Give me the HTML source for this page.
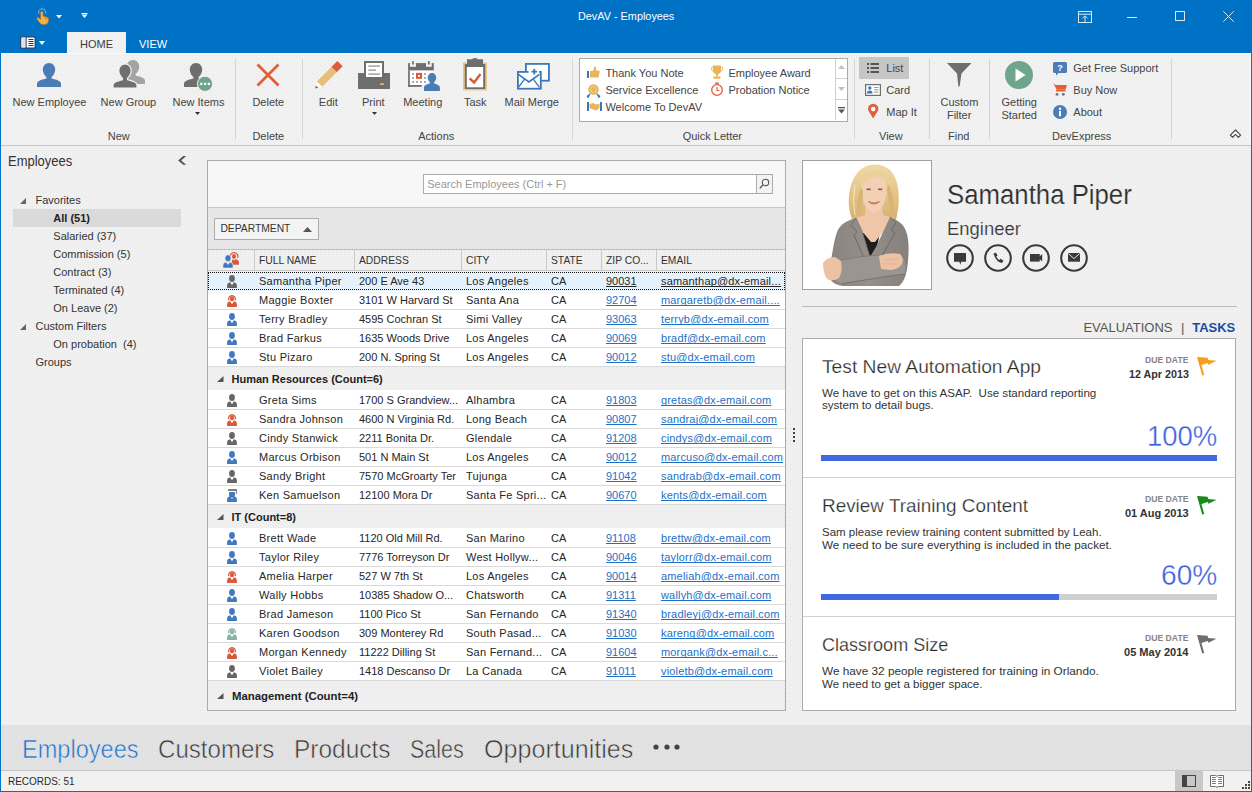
<!DOCTYPE html>
<html><head><meta charset="utf-8"><title>DevAV - Employees</title>
<style>
html,body{margin:0;padding:0;}
body{width:1252px;height:792px;overflow:hidden;position:relative;background:#F0F0F0;font-family:"Liberation Sans",sans-serif;}
.r{position:absolute;}
.t{position:absolute;white-space:nowrap;}
svg{overflow:visible}
.tex{background-image:radial-gradient(circle at 0.5px 0.5px, rgba(0,0,0,0.05) 0.9px, transparent 1px),radial-gradient(circle at 2.5px 2.5px, rgba(0,0,0,0.05) 0.9px, transparent 1px);background-size:4px 4px;}
</style></head><body>
<div class="r" style="left:0px;top:0px;width:1252px;height:53px;background-color:#0072C6;"></div>
<div class="r tex" style="left:0px;top:53px;width:1252px;height:92px;background-color:#F2F2F2;"></div>
<div class="r" style="left:0px;top:145px;width:1252px;height:1px;background-color:#C5C5C5;"></div>
<div class="r" style="left:1px;top:53px;width:1250px;height:1px;background-color:#FAFAFA;"></div>
<div class="r" style="left:1250px;top:53px;width:1px;height:92px;background-color:#FAFAFA;"></div>
<div class="r tex" style="left:0px;top:146px;width:1252px;height:579px;background-color:#F1F1F1;"></div>
<div class="r tex" style="left:0px;top:725px;width:1252px;height:45px;background-color:#E3E3E3;"></div>
<div class="r" style="left:0px;top:770px;width:1252px;height:1px;background-color:#C8C8C8;"></div>
<div class="r" style="left:0px;top:771px;width:1252px;height:20px;background-color:#F1F1F1;"></div>
<div class="r" style="left:0px;top:53px;width:1px;height:739px;background-color:#0072C6;"></div>
<div class="r" style="left:1251px;top:53px;width:1px;height:739px;background-color:#0072C6;"></div>
<div class="r" style="left:0px;top:791px;width:1252px;height:1px;background-color:#0072C6;"></div>
<div class="t" style="left:577.50px;top:11.17px;font-size:11.5px;line-height:11.5px;color:#FFFFFF;transform:scaleX(0.9437);transform-origin:0 0;">DevAV - Employees</div>
<div class="r tex" style="left:67px;top:32px;width:59px;height:21px;background-color:#F2F2F2;"></div>
<div class="t" style="left:80.00px;top:38.69px;font-size:11px;line-height:11px;color:#3C3C3C;">HOME</div>
<div class="t" style="left:139.00px;top:38.69px;font-size:11px;line-height:11px;color:#FFFFFF;">VIEW</div>
<div class="t" style="left:12.50px;top:97.09px;font-size:11px;line-height:11px;color:#444444;">New Employee</div>
<div class="t" style="left:100.60px;top:97.09px;font-size:11px;line-height:11px;color:#444444;">New Group</div>
<div class="t" style="left:172.50px;top:97.09px;font-size:11px;line-height:11px;color:#444444;">New Items</div>
<div class="t" style="left:252.40px;top:97.09px;font-size:11px;line-height:11px;color:#444444;">Delete</div>
<div class="t" style="left:318.80px;top:97.09px;font-size:11px;line-height:11px;color:#444444;">Edit</div>
<div class="t" style="left:362.00px;top:97.09px;font-size:11px;line-height:11px;color:#444444;">Print</div>
<div class="t" style="left:403.20px;top:97.09px;font-size:11px;line-height:11px;color:#444444;">Meeting</div>
<div class="t" style="left:463.90px;top:97.09px;font-size:11px;line-height:11px;color:#444444;">Task</div>
<div class="t" style="left:504.50px;top:97.09px;font-size:11px;line-height:11px;color:#444444;">Mail Merge</div>
<div class="t" style="left:107.70px;top:130.69px;font-size:11px;line-height:11px;color:#444444;">New</div>
<div class="t" style="left:252.40px;top:130.69px;font-size:11px;line-height:11px;color:#444444;">Delete</div>
<div class="t" style="left:418.20px;top:130.69px;font-size:11px;line-height:11px;color:#444444;">Actions</div>
<div class="t" style="left:682.70px;top:130.69px;font-size:11px;line-height:11px;color:#444444;">Quick Letter</div>
<div class="t" style="left:879.00px;top:130.69px;font-size:11px;line-height:11px;color:#444444;">View</div>
<div class="t" style="left:948.00px;top:130.69px;font-size:11px;line-height:11px;color:#444444;">Find</div>
<div class="t" style="left:1052.00px;top:130.69px;font-size:11px;line-height:11px;color:#444444;">DevExpress</div>
<div class="t" style="left:659.4px;width:600px;text-align:center;top:96.99px;font-size:11px;line-height:11px;color:#444444;">Custom</div>
<div class="t" style="left:659.2px;width:600px;text-align:center;top:109.59px;font-size:11px;line-height:11px;color:#444444;">Filter</div>
<div class="t" style="left:719.2px;width:600px;text-align:center;top:96.99px;font-size:11px;line-height:11px;color:#444444;">Getting</div>
<div class="t" style="left:719.2px;width:600px;text-align:center;top:109.59px;font-size:11px;line-height:11px;color:#444444;">Started</div>
<div class="r" style="left:235px;top:59px;width:1px;height:80px;background-color:#D5D5D5;"></div>
<div class="r" style="left:302px;top:59px;width:1px;height:80px;background-color:#D5D5D5;"></div>
<div class="r" style="left:572px;top:59px;width:1px;height:80px;background-color:#D5D5D5;"></div>
<div class="r" style="left:854px;top:59px;width:1px;height:80px;background-color:#D5D5D5;"></div>
<div class="r" style="left:929px;top:59px;width:1px;height:80px;background-color:#D5D5D5;"></div>
<div class="r" style="left:989px;top:59px;width:1px;height:80px;background-color:#D5D5D5;"></div>
<div class="r" style="left:1171px;top:59px;width:1px;height:80px;background-color:#D5D5D5;"></div>
<div class="r" style="left:579px;top:58px;width:269px;height:64px;box-sizing:border-box;border:1px solid #ABABAB;background:#FFFFFF;"></div>
<div class="t" style="left:605.40px;top:68.29px;font-size:11px;line-height:11px;color:#444444;">Thank You Note</div>
<div class="t" style="left:605.40px;top:85.29px;font-size:11px;line-height:11px;color:#444444;">Service Excellence</div>
<div class="t" style="left:605.40px;top:102.19px;font-size:11px;line-height:11px;color:#444444;">Welcome To DevAV</div>
<div class="t" style="left:728.40px;top:68.29px;font-size:11px;line-height:11px;color:#444444;">Employee Award</div>
<div class="t" style="left:728.40px;top:85.29px;font-size:11px;line-height:11px;color:#444444;">Probation Notice</div>
<div class="r" style="left:859px;top:57px;width:50px;height:22px;background-color:#C6C6C6;"></div>
<div class="t" style="left:886.30px;top:62.89px;font-size:11px;line-height:11px;color:#444444;">List</div>
<div class="t" style="left:886.30px;top:84.89px;font-size:11px;line-height:11px;color:#444444;">Card</div>
<div class="t" style="left:886.30px;top:106.89px;font-size:11px;line-height:11px;color:#444444;">Map It</div>
<div class="t" style="left:1073.30px;top:62.89px;font-size:11px;line-height:11px;color:#444444;">Get Free Support</div>
<div class="t" style="left:1073.30px;top:84.89px;font-size:11px;line-height:11px;color:#444444;">Buy Now</div>
<div class="t" style="left:1073.30px;top:106.89px;font-size:11px;line-height:11px;color:#444444;">About</div>
<div class="t" style="left:7.60px;top:154.05px;font-size:14px;line-height:14px;color:#333333;transform:scaleX(0.9270);transform-origin:0 0;">Employees</div>
<div class="r" style="left:13px;top:209px;width:168px;height:18px;background-color:#DADADA;"></div>
<div class="t" style="left:35.50px;top:194.89px;font-size:11px;line-height:11px;color:#333333;">Favorites</div>
<div class="t" style="left:53.30px;top:213.09px;font-size:11px;line-height:11px;color:#222222;font-weight:700;">All (51)</div>
<div class="t" style="left:53.30px;top:230.99px;font-size:11px;line-height:11px;color:#333333;">Salaried (37)</div>
<div class="t" style="left:53.30px;top:248.99px;font-size:11px;line-height:11px;color:#333333;">Commission (5)</div>
<div class="t" style="left:53.30px;top:266.99px;font-size:11px;line-height:11px;color:#333333;">Contract (3)</div>
<div class="t" style="left:53.30px;top:284.99px;font-size:11px;line-height:11px;color:#333333;">Terminated (4)</div>
<div class="t" style="left:53.30px;top:302.99px;font-size:11px;line-height:11px;color:#333333;">On Leave (2)</div>
<div class="t" style="left:35.50px;top:320.99px;font-size:11px;line-height:11px;color:#333333;">Custom Filters</div>
<div class="t" style="left:53.30px;top:338.99px;font-size:11px;line-height:11px;color:#333333;">On probation&nbsp; (4)</div>
<div class="t" style="left:35.50px;top:356.99px;font-size:11px;line-height:11px;color:#333333;">Groups</div>
<div class="r" style="left:207px;top:160px;width:579px;height:551px;box-sizing:border-box;border:1px solid #ABABAB;background:#FFFFFF;"></div>
<div class="r" style="left:208px;top:161px;width:577px;height:46px;background-color:#F7F7F7;"></div>
<div class="r" style="left:208px;top:207px;width:577px;height:1px;background-color:#C8C8C8;"></div>
<div class="r tex" style="left:208px;top:208px;width:577px;height:41px;background-color:#E8E8E8;"></div>
<div class="r" style="left:208px;top:249px;width:577px;height:1px;background-color:#C0C0C0;"></div>
<div class="r tex" style="left:208px;top:250px;width:577px;height:21px;background-color:#F1F1F1;"></div>
<div class="r" style="left:423px;top:174px;width:350px;height:20px;box-sizing:border-box;border:1px solid #ABABAB;background:#FFFFFF;"></div>
<div class="t" style="left:427.20px;top:178.99px;font-size:11px;line-height:11px;color:#999999;">Search Employees (Ctrl + F)</div>
<div class="r" style="left:214px;top:218px;width:105px;height:22px;box-sizing:border-box;border:1px solid #ABABAB;background:#F3F3F3;"></div>
<div class="t" style="left:220.40px;top:224.48px;font-size:10.3px;line-height:10.3px;color:#333333;">DEPARTMENT</div>
<div class="r" style="left:802px;top:160px;width:130px;height:130px;box-sizing:border-box;border:1px solid #A0A0A0;background:#FFFFFF;"></div>
<div class="t" style="left:946.80px;top:182.34px;font-size:27px;line-height:27px;color:#2E2E2E;-webkit-text-stroke:0.2px #F0F0F0;transform:scaleX(0.9544);transform-origin:0 0;">Samantha Piper</div>
<div class="t" style="left:946.80px;top:220.26px;font-size:18px;line-height:18px;color:#383838;-webkit-text-stroke:0.15px #F0F0F0;transform:scaleX(1.0242);transform-origin:0 0;">Engineer</div>
<div class="r" style="left:802px;top:306px;width:435px;height:1px;background-color:#BBBBBB;"></div>
<div class="t" style="left:1083.40px;top:320.50px;font-size:13px;line-height:13px;color:#555555;">EVALUATIONS</div>
<div class="t" style="left:1181.00px;top:320.50px;font-size:13px;line-height:13px;color:#555555;">|</div>
<div class="t" style="left:1192.20px;top:320.50px;font-size:13px;line-height:13px;color:#1B4AA5;font-weight:700;">TASKS</div>
<div class="r" style="left:802px;top:338px;width:434px;height:373px;box-sizing:border-box;border:1px solid #ABABAB;background:#FFFFFF;"></div>
<div class="t" style="left:21.50px;top:736.71px;font-size:25.5px;line-height:25.5px;color:#1873D0;-webkit-text-stroke:0.55px #E3E3E3;transform:scaleX(0.9243);transform-origin:0 0;">Employees</div>
<div class="t" style="left:157.80px;top:736.71px;font-size:25.5px;line-height:25.5px;color:#383838;-webkit-text-stroke:0.55px #E3E3E3;transform:scaleX(0.9442);transform-origin:0 0;">Customers</div>
<div class="t" style="left:293.80px;top:736.71px;font-size:25.5px;line-height:25.5px;color:#383838;-webkit-text-stroke:0.55px #E3E3E3;transform:scaleX(0.9599);transform-origin:0 0;">Products</div>
<div class="t" style="left:409.60px;top:736.71px;font-size:25.5px;line-height:25.5px;color:#383838;-webkit-text-stroke:0.55px #E3E3E3;transform:scaleX(0.8418);transform-origin:0 0;">Sales</div>
<div class="t" style="left:483.70px;top:736.71px;font-size:25.5px;line-height:25.5px;color:#383838;-webkit-text-stroke:0.55px #E3E3E3;transform:scaleX(0.9850);transform-origin:0 0;">Opportunities</div>
<div class="t" style="left:7.50px;top:776.43px;font-size:10.6px;line-height:10.6px;color:#2A2A2A;transform:scaleX(0.9408);transform-origin:0 0;">RECORDS: 51</div>
<div class="r" style="left:254px;top:250px;width:1px;height:21px;background-color:#C8C8C8;"></div>
<div class="r" style="left:354px;top:250px;width:1px;height:21px;background-color:#C8C8C8;"></div>
<div class="r" style="left:461px;top:250px;width:1px;height:21px;background-color:#C8C8C8;"></div>
<div class="r" style="left:546px;top:250px;width:1px;height:21px;background-color:#C8C8C8;"></div>
<div class="r" style="left:601px;top:250px;width:1px;height:21px;background-color:#C8C8C8;"></div>
<div class="r" style="left:656px;top:250px;width:1px;height:21px;background-color:#C8C8C8;"></div>
<div class="r" style="left:208px;top:270px;width:577px;height:1px;background-color:#C8C8C8;"></div>
<div class="t" style="left:259.00px;top:255.58px;font-size:10.3px;line-height:10.3px;color:#333333;">FULL NAME</div>
<div class="t" style="left:359.00px;top:255.58px;font-size:10.3px;line-height:10.3px;color:#333333;">ADDRESS</div>
<div class="t" style="left:466.00px;top:255.58px;font-size:10.3px;line-height:10.3px;color:#333333;">CITY</div>
<div class="t" style="left:551.00px;top:255.58px;font-size:10.3px;line-height:10.3px;color:#333333;">STATE</div>
<div class="t" style="left:606.00px;top:255.58px;font-size:10.3px;line-height:10.3px;color:#333333;">ZIP CO...</div>
<div class="t" style="left:661.00px;top:255.58px;font-size:10.3px;line-height:10.3px;color:#333333;">EMAIL</div>
<div class="r" style="left:208px;top:271px;width:577px;height:20px;background-color:#E5F1FB;"></div>
<svg class="r" style="left:227px;top:275px;" width="10" height="13" viewBox="0 0 10 13"><ellipse cx="5" cy="3.45" rx="2.9" ry="3.45" fill="#666666"/><path d="M0.1 12.9 L0.1 10.6 Q0.2 7.7 3.1 7.2 L5 10.2 L6.9 7.2 Q9.8 7.7 9.9 10.6 L9.9 12.9 Z" fill="#666666"/></svg>
<div class="t" style="left:259.00px;top:276.29px;font-size:11px;line-height:11px;color:#262626;letter-spacing:0.28px;">Samantha Piper</div>
<div class="t" style="left:359.00px;top:276.29px;font-size:11px;line-height:11px;color:#262626;">200 E Ave 43</div>
<div class="t" style="left:466.00px;top:276.29px;font-size:11px;line-height:11px;color:#262626;letter-spacing:0.25px;">Los Angeles</div>
<div class="t" style="left:551.00px;top:276.29px;font-size:11px;line-height:11px;color:#262626;">CA</div>
<div class="t" style="left:606.00px;top:276.29px;font-size:11px;line-height:11px;color:#262626;text-decoration:underline;text-decoration-skip-ink:none;">90031</div>
<div class="t" style="left:661.00px;top:276.29px;font-size:11px;line-height:11px;color:#262626;text-decoration:underline;text-decoration-skip-ink:none;letter-spacing:0.17px;">samanthap@dx-email...</div>
<div class="r" style="left:208px;top:272px;width:577px;height:18px;box-sizing:border-box;border:1px dotted #111;background:transparent;"></div>
<svg class="r" style="left:227px;top:294px;" width="10" height="13" viewBox="0 0 10 13"><path d="M1.8 6.3 A3.4 3.4 0 1 1 8.2 6.3" fill="none" stroke="#D9593A" stroke-width="1.3"/><ellipse cx="5" cy="4.9" rx="2.05" ry="2.35" fill="#D9593A"/><path d="M0.1 12.9 L0.1 10.6 Q0.2 7.7 3.1 7.2 L5 10.2 L6.9 7.2 Q9.8 7.7 9.9 10.6 L9.9 12.9 Z" fill="#D9593A"/></svg>
<div class="t" style="left:259.00px;top:295.39px;font-size:11px;line-height:11px;color:#262626;letter-spacing:0.28px;">Maggie Boxter</div>
<div class="t" style="left:359.00px;top:295.39px;font-size:11px;line-height:11px;color:#262626;">3101 W Harvard St</div>
<div class="t" style="left:466.00px;top:295.39px;font-size:11px;line-height:11px;color:#262626;letter-spacing:0.25px;">Santa Ana</div>
<div class="t" style="left:551.00px;top:295.39px;font-size:11px;line-height:11px;color:#262626;">CA</div>
<div class="t" style="left:606.00px;top:295.39px;font-size:11px;line-height:11px;color:#1F6FC6;text-decoration:underline;text-decoration-skip-ink:none;">92704</div>
<div class="t" style="left:661.00px;top:295.39px;font-size:11px;line-height:11px;color:#1F6FC6;text-decoration:underline;text-decoration-skip-ink:none;letter-spacing:0.17px;">margaretb@dx-email....</div>
<div class="r" style="left:208px;top:309px;width:577px;height:1px;background-color:#DADADA;"></div>
<svg class="r" style="left:227px;top:313px;" width="10" height="13" viewBox="0 0 10 13"><ellipse cx="5" cy="3.45" rx="2.9" ry="3.45" fill="#4178BE"/><path d="M0.1 12.9 L0.1 10.6 Q0.2 7.7 3.1 7.2 L5 10.2 L6.9 7.2 Q9.8 7.7 9.9 10.6 L9.9 12.9 Z" fill="#4178BE"/></svg>
<div class="t" style="left:259.00px;top:314.39px;font-size:11px;line-height:11px;color:#262626;letter-spacing:0.28px;">Terry Bradley</div>
<div class="t" style="left:359.00px;top:314.39px;font-size:11px;line-height:11px;color:#262626;">4595 Cochran St</div>
<div class="t" style="left:466.00px;top:314.39px;font-size:11px;line-height:11px;color:#262626;letter-spacing:0.25px;">Simi Valley</div>
<div class="t" style="left:551.00px;top:314.39px;font-size:11px;line-height:11px;color:#262626;">CA</div>
<div class="t" style="left:606.00px;top:314.39px;font-size:11px;line-height:11px;color:#1F6FC6;text-decoration:underline;text-decoration-skip-ink:none;">93063</div>
<div class="t" style="left:661.00px;top:314.39px;font-size:11px;line-height:11px;color:#1F6FC6;text-decoration:underline;text-decoration-skip-ink:none;letter-spacing:0.17px;">terryb@dx-email.com</div>
<div class="r" style="left:208px;top:328px;width:577px;height:1px;background-color:#DADADA;"></div>
<svg class="r" style="left:227px;top:332px;" width="10" height="13" viewBox="0 0 10 13"><ellipse cx="5" cy="3.45" rx="2.9" ry="3.45" fill="#4178BE"/><path d="M0.1 12.9 L0.1 10.6 Q0.2 7.7 3.1 7.2 L5 10.2 L6.9 7.2 Q9.8 7.7 9.9 10.6 L9.9 12.9 Z" fill="#4178BE"/></svg>
<div class="t" style="left:259.00px;top:333.39px;font-size:11px;line-height:11px;color:#262626;letter-spacing:0.28px;">Brad Farkus</div>
<div class="t" style="left:359.00px;top:333.39px;font-size:11px;line-height:11px;color:#262626;">1635 Woods Drive</div>
<div class="t" style="left:466.00px;top:333.39px;font-size:11px;line-height:11px;color:#262626;letter-spacing:0.25px;">Los Angeles</div>
<div class="t" style="left:551.00px;top:333.39px;font-size:11px;line-height:11px;color:#262626;">CA</div>
<div class="t" style="left:606.00px;top:333.39px;font-size:11px;line-height:11px;color:#1F6FC6;text-decoration:underline;text-decoration-skip-ink:none;">90069</div>
<div class="t" style="left:661.00px;top:333.39px;font-size:11px;line-height:11px;color:#1F6FC6;text-decoration:underline;text-decoration-skip-ink:none;letter-spacing:0.17px;">bradf@dx-email.com</div>
<div class="r" style="left:208px;top:347px;width:577px;height:1px;background-color:#DADADA;"></div>
<svg class="r" style="left:227px;top:351px;" width="10" height="13" viewBox="0 0 10 13"><ellipse cx="5" cy="3.45" rx="2.9" ry="3.45" fill="#4178BE"/><path d="M0.1 12.9 L0.1 10.6 Q0.2 7.7 3.1 7.2 L5 10.2 L6.9 7.2 Q9.8 7.7 9.9 10.6 L9.9 12.9 Z" fill="#4178BE"/></svg>
<div class="t" style="left:259.00px;top:352.39px;font-size:11px;line-height:11px;color:#262626;letter-spacing:0.28px;">Stu Pizaro</div>
<div class="t" style="left:359.00px;top:352.39px;font-size:11px;line-height:11px;color:#262626;">200 N. Spring St</div>
<div class="t" style="left:466.00px;top:352.39px;font-size:11px;line-height:11px;color:#262626;letter-spacing:0.25px;">Los Angeles</div>
<div class="t" style="left:551.00px;top:352.39px;font-size:11px;line-height:11px;color:#262626;">CA</div>
<div class="t" style="left:606.00px;top:352.39px;font-size:11px;line-height:11px;color:#1F6FC6;text-decoration:underline;text-decoration-skip-ink:none;">90012</div>
<div class="t" style="left:661.00px;top:352.39px;font-size:11px;line-height:11px;color:#1F6FC6;text-decoration:underline;text-decoration-skip-ink:none;letter-spacing:0.17px;">stu@dx-email.com</div>
<div class="r" style="left:208px;top:366px;width:577px;height:1px;background-color:#DADADA;"></div>
<div class="r tex" style="left:208px;top:367px;width:577px;height:23px;background-color:#F1F1F1;"></div>
<svg class="r" style="left:217px;top:376px;" width="7" height="6" viewBox="0 0 7 6"><path d="M6.5 0 L6.5 6 L0 6 Z" fill="#555"/></svg>
<div class="t" style="left:231.50px;top:374.29px;font-size:11px;line-height:11px;color:#222222;font-weight:700;">Human Resources (Count=6)</div>
<svg class="r" style="left:227px;top:394px;" width="10" height="13" viewBox="0 0 10 13"><ellipse cx="5" cy="3.45" rx="2.9" ry="3.45" fill="#666666"/><path d="M0.1 12.9 L0.1 10.6 Q0.2 7.7 3.1 7.2 L5 10.2 L6.9 7.2 Q9.8 7.7 9.9 10.6 L9.9 12.9 Z" fill="#666666"/></svg>
<div class="t" style="left:259.00px;top:395.29px;font-size:11px;line-height:11px;color:#262626;letter-spacing:0.28px;">Greta Sims</div>
<div class="t" style="left:359.00px;top:395.29px;font-size:11px;line-height:11px;color:#262626;">1700 S Grandview...</div>
<div class="t" style="left:466.00px;top:395.29px;font-size:11px;line-height:11px;color:#262626;letter-spacing:0.25px;">Alhambra</div>
<div class="t" style="left:551.00px;top:395.29px;font-size:11px;line-height:11px;color:#262626;">CA</div>
<div class="t" style="left:606.00px;top:395.29px;font-size:11px;line-height:11px;color:#1F6FC6;text-decoration:underline;text-decoration-skip-ink:none;">91803</div>
<div class="t" style="left:661.00px;top:395.29px;font-size:11px;line-height:11px;color:#1F6FC6;text-decoration:underline;text-decoration-skip-ink:none;letter-spacing:0.17px;">gretas@dx-email.com</div>
<div class="r" style="left:208px;top:409px;width:577px;height:1px;background-color:#DADADA;"></div>
<svg class="r" style="left:227px;top:413px;" width="10" height="13" viewBox="0 0 10 13"><path d="M1.8 6.3 A3.4 3.4 0 1 1 8.2 6.3" fill="none" stroke="#D9593A" stroke-width="1.3"/><ellipse cx="5" cy="4.9" rx="2.05" ry="2.35" fill="#D9593A"/><path d="M0.1 12.9 L0.1 10.6 Q0.2 7.7 3.1 7.2 L5 10.2 L6.9 7.2 Q9.8 7.7 9.9 10.6 L9.9 12.9 Z" fill="#D9593A"/></svg>
<div class="t" style="left:259.00px;top:414.39px;font-size:11px;line-height:11px;color:#262626;letter-spacing:0.28px;">Sandra Johnson</div>
<div class="t" style="left:359.00px;top:414.39px;font-size:11px;line-height:11px;color:#262626;">4600 N Virginia Rd.</div>
<div class="t" style="left:466.00px;top:414.39px;font-size:11px;line-height:11px;color:#262626;letter-spacing:0.25px;">Long Beach</div>
<div class="t" style="left:551.00px;top:414.39px;font-size:11px;line-height:11px;color:#262626;">CA</div>
<div class="t" style="left:606.00px;top:414.39px;font-size:11px;line-height:11px;color:#1F6FC6;text-decoration:underline;text-decoration-skip-ink:none;">90807</div>
<div class="t" style="left:661.00px;top:414.39px;font-size:11px;line-height:11px;color:#1F6FC6;text-decoration:underline;text-decoration-skip-ink:none;letter-spacing:0.17px;">sandraj@dx-email.com</div>
<div class="r" style="left:208px;top:428px;width:577px;height:1px;background-color:#DADADA;"></div>
<svg class="r" style="left:227px;top:432px;" width="10" height="13" viewBox="0 0 10 13"><ellipse cx="5" cy="3.45" rx="2.9" ry="3.45" fill="#666666"/><path d="M0.1 12.9 L0.1 10.6 Q0.2 7.7 3.1 7.2 L5 10.2 L6.9 7.2 Q9.8 7.7 9.9 10.6 L9.9 12.9 Z" fill="#666666"/></svg>
<div class="t" style="left:259.00px;top:433.39px;font-size:11px;line-height:11px;color:#262626;letter-spacing:0.28px;">Cindy Stanwick</div>
<div class="t" style="left:359.00px;top:433.39px;font-size:11px;line-height:11px;color:#262626;">2211 Bonita Dr.</div>
<div class="t" style="left:466.00px;top:433.39px;font-size:11px;line-height:11px;color:#262626;letter-spacing:0.25px;">Glendale</div>
<div class="t" style="left:551.00px;top:433.39px;font-size:11px;line-height:11px;color:#262626;">CA</div>
<div class="t" style="left:606.00px;top:433.39px;font-size:11px;line-height:11px;color:#1F6FC6;text-decoration:underline;text-decoration-skip-ink:none;">91208</div>
<div class="t" style="left:661.00px;top:433.39px;font-size:11px;line-height:11px;color:#1F6FC6;text-decoration:underline;text-decoration-skip-ink:none;letter-spacing:0.17px;">cindys@dx-email.com</div>
<div class="r" style="left:208px;top:447px;width:577px;height:1px;background-color:#DADADA;"></div>
<svg class="r" style="left:227px;top:451px;" width="10" height="13" viewBox="0 0 10 13"><ellipse cx="5" cy="3.45" rx="2.9" ry="3.45" fill="#4178BE"/><path d="M0.1 12.9 L0.1 10.6 Q0.2 7.7 3.1 7.2 L5 10.2 L6.9 7.2 Q9.8 7.7 9.9 10.6 L9.9 12.9 Z" fill="#4178BE"/></svg>
<div class="t" style="left:259.00px;top:452.39px;font-size:11px;line-height:11px;color:#262626;letter-spacing:0.28px;">Marcus Orbison</div>
<div class="t" style="left:359.00px;top:452.39px;font-size:11px;line-height:11px;color:#262626;">501 N Main St</div>
<div class="t" style="left:466.00px;top:452.39px;font-size:11px;line-height:11px;color:#262626;letter-spacing:0.25px;">Los Angeles</div>
<div class="t" style="left:551.00px;top:452.39px;font-size:11px;line-height:11px;color:#262626;">CA</div>
<div class="t" style="left:606.00px;top:452.39px;font-size:11px;line-height:11px;color:#1F6FC6;text-decoration:underline;text-decoration-skip-ink:none;">90012</div>
<div class="t" style="left:661.00px;top:452.39px;font-size:11px;line-height:11px;color:#1F6FC6;text-decoration:underline;text-decoration-skip-ink:none;letter-spacing:0.17px;">marcuso@dx-email.com</div>
<div class="r" style="left:208px;top:466px;width:577px;height:1px;background-color:#DADADA;"></div>
<svg class="r" style="left:227px;top:470px;" width="10" height="13" viewBox="0 0 10 13"><ellipse cx="5" cy="3.45" rx="2.9" ry="3.45" fill="#666666"/><path d="M0.1 12.9 L0.1 10.6 Q0.2 7.7 3.1 7.2 L5 10.2 L6.9 7.2 Q9.8 7.7 9.9 10.6 L9.9 12.9 Z" fill="#666666"/></svg>
<div class="t" style="left:259.00px;top:471.39px;font-size:11px;line-height:11px;color:#262626;letter-spacing:0.28px;">Sandy Bright</div>
<div class="t" style="left:359.00px;top:471.39px;font-size:11px;line-height:11px;color:#262626;">7570 McGroarty Ter</div>
<div class="t" style="left:466.00px;top:471.39px;font-size:11px;line-height:11px;color:#262626;letter-spacing:0.25px;">Tujunga</div>
<div class="t" style="left:551.00px;top:471.39px;font-size:11px;line-height:11px;color:#262626;">CA</div>
<div class="t" style="left:606.00px;top:471.39px;font-size:11px;line-height:11px;color:#1F6FC6;text-decoration:underline;text-decoration-skip-ink:none;">91042</div>
<div class="t" style="left:661.00px;top:471.39px;font-size:11px;line-height:11px;color:#1F6FC6;text-decoration:underline;text-decoration-skip-ink:none;letter-spacing:0.17px;">sandrab@dx-email.com</div>
<div class="r" style="left:208px;top:485px;width:577px;height:1px;background-color:#DADADA;"></div>
<svg class="r" style="left:227px;top:489px;" width="10" height="13" viewBox="0 0 10 13"><path d="M1 0.1 L9.6 0.1 L9.6 1.9 L1 1.9 Z" fill="#707070"/><rect x="8.9" y="0.1" width="0.9" height="5" fill="#707070"/><path d="M2.1 3 L7.9 3 L7.9 6 Q7.9 8.8 5 8.8 Q2.1 8.8 2.1 6 Z" fill="#4178BE"/><path d="M0.1 12.9 L0.1 10.6 Q0.2 7.7 3.1 7.2 L5 10.2 L6.9 7.2 Q9.8 7.7 9.9 10.6 L9.9 12.9 Z" fill="#4178BE"/></svg>
<div class="t" style="left:259.00px;top:490.39px;font-size:11px;line-height:11px;color:#262626;letter-spacing:0.28px;">Ken Samuelson</div>
<div class="t" style="left:359.00px;top:490.39px;font-size:11px;line-height:11px;color:#262626;">12100 Mora Dr</div>
<div class="t" style="left:466.00px;top:490.39px;font-size:11px;line-height:11px;color:#262626;letter-spacing:0.25px;">Santa Fe Spri...</div>
<div class="t" style="left:551.00px;top:490.39px;font-size:11px;line-height:11px;color:#262626;">CA</div>
<div class="t" style="left:606.00px;top:490.39px;font-size:11px;line-height:11px;color:#1F6FC6;text-decoration:underline;text-decoration-skip-ink:none;">90670</div>
<div class="t" style="left:661.00px;top:490.39px;font-size:11px;line-height:11px;color:#1F6FC6;text-decoration:underline;text-decoration-skip-ink:none;letter-spacing:0.17px;">kents@dx-email.com</div>
<div class="r" style="left:208px;top:504px;width:577px;height:1px;background-color:#DADADA;"></div>
<div class="r tex" style="left:208px;top:505px;width:577px;height:23px;background-color:#F1F1F1;"></div>
<svg class="r" style="left:217px;top:514px;" width="7" height="6" viewBox="0 0 7 6"><path d="M6.5 0 L6.5 6 L0 6 Z" fill="#555"/></svg>
<div class="t" style="left:231.50px;top:512.29px;font-size:11px;line-height:11px;color:#222222;font-weight:700;">IT (Count=8)</div>
<svg class="r" style="left:227px;top:532px;" width="10" height="13" viewBox="0 0 10 13"><ellipse cx="5" cy="3.45" rx="2.9" ry="3.45" fill="#4178BE"/><path d="M0.1 12.9 L0.1 10.6 Q0.2 7.7 3.1 7.2 L5 10.2 L6.9 7.2 Q9.8 7.7 9.9 10.6 L9.9 12.9 Z" fill="#4178BE"/></svg>
<div class="t" style="left:259.00px;top:533.29px;font-size:11px;line-height:11px;color:#262626;letter-spacing:0.28px;">Brett Wade</div>
<div class="t" style="left:359.00px;top:533.29px;font-size:11px;line-height:11px;color:#262626;">1120 Old Mill Rd.</div>
<div class="t" style="left:466.00px;top:533.29px;font-size:11px;line-height:11px;color:#262626;letter-spacing:0.25px;">San Marino</div>
<div class="t" style="left:551.00px;top:533.29px;font-size:11px;line-height:11px;color:#262626;">CA</div>
<div class="t" style="left:606.00px;top:533.29px;font-size:11px;line-height:11px;color:#1F6FC6;text-decoration:underline;text-decoration-skip-ink:none;">91108</div>
<div class="t" style="left:661.00px;top:533.29px;font-size:11px;line-height:11px;color:#1F6FC6;text-decoration:underline;text-decoration-skip-ink:none;letter-spacing:0.17px;">brettw@dx-email.com</div>
<div class="r" style="left:208px;top:547px;width:577px;height:1px;background-color:#DADADA;"></div>
<svg class="r" style="left:227px;top:551px;" width="10" height="13" viewBox="0 0 10 13"><ellipse cx="5" cy="3.45" rx="2.9" ry="3.45" fill="#4178BE"/><path d="M0.1 12.9 L0.1 10.6 Q0.2 7.7 3.1 7.2 L5 10.2 L6.9 7.2 Q9.8 7.7 9.9 10.6 L9.9 12.9 Z" fill="#4178BE"/></svg>
<div class="t" style="left:259.00px;top:552.39px;font-size:11px;line-height:11px;color:#262626;letter-spacing:0.28px;">Taylor Riley</div>
<div class="t" style="left:359.00px;top:552.39px;font-size:11px;line-height:11px;color:#262626;">7776 Torreyson Dr</div>
<div class="t" style="left:466.00px;top:552.39px;font-size:11px;line-height:11px;color:#262626;letter-spacing:0.25px;">West Hollyw...</div>
<div class="t" style="left:551.00px;top:552.39px;font-size:11px;line-height:11px;color:#262626;">CA</div>
<div class="t" style="left:606.00px;top:552.39px;font-size:11px;line-height:11px;color:#1F6FC6;text-decoration:underline;text-decoration-skip-ink:none;">90046</div>
<div class="t" style="left:661.00px;top:552.39px;font-size:11px;line-height:11px;color:#1F6FC6;text-decoration:underline;text-decoration-skip-ink:none;letter-spacing:0.17px;">taylorr@dx-email.com</div>
<div class="r" style="left:208px;top:566px;width:577px;height:1px;background-color:#DADADA;"></div>
<svg class="r" style="left:227px;top:570px;" width="10" height="13" viewBox="0 0 10 13"><path d="M1.8 6.3 A3.4 3.4 0 1 1 8.2 6.3" fill="none" stroke="#D9593A" stroke-width="1.3"/><ellipse cx="5" cy="4.9" rx="2.05" ry="2.35" fill="#D9593A"/><path d="M0.1 12.9 L0.1 10.6 Q0.2 7.7 3.1 7.2 L5 10.2 L6.9 7.2 Q9.8 7.7 9.9 10.6 L9.9 12.9 Z" fill="#D9593A"/></svg>
<div class="t" style="left:259.00px;top:571.39px;font-size:11px;line-height:11px;color:#262626;letter-spacing:0.28px;">Amelia Harper</div>
<div class="t" style="left:359.00px;top:571.39px;font-size:11px;line-height:11px;color:#262626;">527 W 7th St</div>
<div class="t" style="left:466.00px;top:571.39px;font-size:11px;line-height:11px;color:#262626;letter-spacing:0.25px;">Los Angeles</div>
<div class="t" style="left:551.00px;top:571.39px;font-size:11px;line-height:11px;color:#262626;">CA</div>
<div class="t" style="left:606.00px;top:571.39px;font-size:11px;line-height:11px;color:#1F6FC6;text-decoration:underline;text-decoration-skip-ink:none;">90014</div>
<div class="t" style="left:661.00px;top:571.39px;font-size:11px;line-height:11px;color:#1F6FC6;text-decoration:underline;text-decoration-skip-ink:none;letter-spacing:0.17px;">ameliah@dx-email.com</div>
<div class="r" style="left:208px;top:585px;width:577px;height:1px;background-color:#DADADA;"></div>
<svg class="r" style="left:227px;top:589px;" width="10" height="13" viewBox="0 0 10 13"><ellipse cx="5" cy="3.45" rx="2.9" ry="3.45" fill="#4178BE"/><path d="M0.1 12.9 L0.1 10.6 Q0.2 7.7 3.1 7.2 L5 10.2 L6.9 7.2 Q9.8 7.7 9.9 10.6 L9.9 12.9 Z" fill="#4178BE"/></svg>
<div class="t" style="left:259.00px;top:590.39px;font-size:11px;line-height:11px;color:#262626;letter-spacing:0.28px;">Wally Hobbs</div>
<div class="t" style="left:359.00px;top:590.39px;font-size:11px;line-height:11px;color:#262626;">10385 Shadow O...</div>
<div class="t" style="left:466.00px;top:590.39px;font-size:11px;line-height:11px;color:#262626;letter-spacing:0.25px;">Chatsworth</div>
<div class="t" style="left:551.00px;top:590.39px;font-size:11px;line-height:11px;color:#262626;">CA</div>
<div class="t" style="left:606.00px;top:590.39px;font-size:11px;line-height:11px;color:#1F6FC6;text-decoration:underline;text-decoration-skip-ink:none;">91311</div>
<div class="t" style="left:661.00px;top:590.39px;font-size:11px;line-height:11px;color:#1F6FC6;text-decoration:underline;text-decoration-skip-ink:none;letter-spacing:0.17px;">wallyh@dx-email.com</div>
<div class="r" style="left:208px;top:604px;width:577px;height:1px;background-color:#DADADA;"></div>
<svg class="r" style="left:227px;top:608px;" width="10" height="13" viewBox="0 0 10 13"><ellipse cx="5" cy="3.45" rx="2.9" ry="3.45" fill="#4178BE"/><path d="M0.1 12.9 L0.1 10.6 Q0.2 7.7 3.1 7.2 L5 10.2 L6.9 7.2 Q9.8 7.7 9.9 10.6 L9.9 12.9 Z" fill="#4178BE"/></svg>
<div class="t" style="left:259.00px;top:609.39px;font-size:11px;line-height:11px;color:#262626;letter-spacing:0.28px;">Brad Jameson</div>
<div class="t" style="left:359.00px;top:609.39px;font-size:11px;line-height:11px;color:#262626;">1100 Pico St</div>
<div class="t" style="left:466.00px;top:609.39px;font-size:11px;line-height:11px;color:#262626;letter-spacing:0.25px;">San Fernando</div>
<div class="t" style="left:551.00px;top:609.39px;font-size:11px;line-height:11px;color:#262626;">CA</div>
<div class="t" style="left:606.00px;top:609.39px;font-size:11px;line-height:11px;color:#1F6FC6;text-decoration:underline;text-decoration-skip-ink:none;">91340</div>
<div class="t" style="left:661.00px;top:609.39px;font-size:11px;line-height:11px;color:#1F6FC6;text-decoration:underline;text-decoration-skip-ink:none;letter-spacing:0.17px;">bradleyj@dx-email.com</div>
<div class="r" style="left:208px;top:623px;width:577px;height:1px;background-color:#DADADA;"></div>
<svg class="r" style="left:227px;top:627px;" width="10" height="13" viewBox="0 0 10 13"><path d="M1.8 6.3 A3.4 3.4 0 1 1 8.2 6.3" fill="none" stroke="#84B5A0" stroke-width="1.3"/><ellipse cx="5" cy="4.9" rx="2.05" ry="2.35" fill="#84B5A0"/><path d="M0.1 12.9 L0.1 10.6 Q0.2 7.7 3.1 7.2 L5 10.2 L6.9 7.2 Q9.8 7.7 9.9 10.6 L9.9 12.9 Z" fill="#84B5A0"/></svg>
<div class="t" style="left:259.00px;top:628.39px;font-size:11px;line-height:11px;color:#262626;letter-spacing:0.28px;">Karen Goodson</div>
<div class="t" style="left:359.00px;top:628.39px;font-size:11px;line-height:11px;color:#262626;">309 Monterey Rd</div>
<div class="t" style="left:466.00px;top:628.39px;font-size:11px;line-height:11px;color:#262626;letter-spacing:0.25px;">South Pasad...</div>
<div class="t" style="left:551.00px;top:628.39px;font-size:11px;line-height:11px;color:#262626;">CA</div>
<div class="t" style="left:606.00px;top:628.39px;font-size:11px;line-height:11px;color:#1F6FC6;text-decoration:underline;text-decoration-skip-ink:none;">91030</div>
<div class="t" style="left:661.00px;top:628.39px;font-size:11px;line-height:11px;color:#1F6FC6;text-decoration:underline;text-decoration-skip-ink:none;letter-spacing:0.17px;">kareng@dx-email.com</div>
<div class="r" style="left:208px;top:642px;width:577px;height:1px;background-color:#DADADA;"></div>
<svg class="r" style="left:227px;top:646px;" width="10" height="13" viewBox="0 0 10 13"><path d="M1.8 6.3 A3.4 3.4 0 1 1 8.2 6.3" fill="none" stroke="#D9593A" stroke-width="1.3"/><ellipse cx="5" cy="4.9" rx="2.05" ry="2.35" fill="#D9593A"/><path d="M0.1 12.9 L0.1 10.6 Q0.2 7.7 3.1 7.2 L5 10.2 L6.9 7.2 Q9.8 7.7 9.9 10.6 L9.9 12.9 Z" fill="#D9593A"/></svg>
<div class="t" style="left:259.00px;top:647.39px;font-size:11px;line-height:11px;color:#262626;letter-spacing:0.28px;">Morgan Kennedy</div>
<div class="t" style="left:359.00px;top:647.39px;font-size:11px;line-height:11px;color:#262626;">11222 Dilling St</div>
<div class="t" style="left:466.00px;top:647.39px;font-size:11px;line-height:11px;color:#262626;letter-spacing:0.25px;">San Fernand...</div>
<div class="t" style="left:551.00px;top:647.39px;font-size:11px;line-height:11px;color:#262626;">CA</div>
<div class="t" style="left:606.00px;top:647.39px;font-size:11px;line-height:11px;color:#1F6FC6;text-decoration:underline;text-decoration-skip-ink:none;">91604</div>
<div class="t" style="left:661.00px;top:647.39px;font-size:11px;line-height:11px;color:#1F6FC6;text-decoration:underline;text-decoration-skip-ink:none;letter-spacing:0.17px;">morgank@dx-email.c...</div>
<div class="r" style="left:208px;top:661px;width:577px;height:1px;background-color:#DADADA;"></div>
<svg class="r" style="left:227px;top:665px;" width="10" height="13" viewBox="0 0 10 13"><ellipse cx="5" cy="3.45" rx="2.9" ry="3.45" fill="#666666"/><path d="M0.1 12.9 L0.1 10.6 Q0.2 7.7 3.1 7.2 L5 10.2 L6.9 7.2 Q9.8 7.7 9.9 10.6 L9.9 12.9 Z" fill="#666666"/></svg>
<div class="t" style="left:259.00px;top:666.39px;font-size:11px;line-height:11px;color:#262626;letter-spacing:0.28px;">Violet Bailey</div>
<div class="t" style="left:359.00px;top:666.39px;font-size:11px;line-height:11px;color:#262626;">1418 Descanso Dr</div>
<div class="t" style="left:466.00px;top:666.39px;font-size:11px;line-height:11px;color:#262626;letter-spacing:0.25px;">La Canada</div>
<div class="t" style="left:551.00px;top:666.39px;font-size:11px;line-height:11px;color:#262626;">CA</div>
<div class="t" style="left:606.00px;top:666.39px;font-size:11px;line-height:11px;color:#1F6FC6;text-decoration:underline;text-decoration-skip-ink:none;">91011</div>
<div class="t" style="left:661.00px;top:666.39px;font-size:11px;line-height:11px;color:#1F6FC6;text-decoration:underline;text-decoration-skip-ink:none;letter-spacing:0.17px;">violetb@dx-email.com</div>
<div class="r" style="left:208px;top:680px;width:577px;height:1px;background-color:#DADADA;"></div>
<div class="r tex" style="left:208px;top:681px;width:577px;height:29px;background-color:#F1F1F1;"></div>
<svg class="r" style="left:217px;top:693px;" width="7" height="6" viewBox="0 0 7 6"><path d="M6.5 0 L6.5 6 L0 6 Z" fill="#555"/></svg>
<div class="t" style="left:231.50px;top:690.59px;font-size:11px;line-height:11px;color:#222222;font-weight:700;transform:scaleX(1.0334);transform-origin:0 0;">Management (Count=4)</div>
<div class="r" style="left:803px;top:477px;width:432px;height:1px;background-color:#D0D0D0;"></div>
<div class="r" style="left:803px;top:616px;width:432px;height:1px;background-color:#D0D0D0;"></div>
<div class="t" style="left:821.50px;top:357.89px;font-size:18.2px;line-height:18.2px;color:#2A2A2A;-webkit-text-stroke:0.25px #FFFFFF;transform:scaleX(1.0569);transform-origin:0 0;">Test New Automation App</div>
<div class="t" style="left:1145.40px;top:355.34px;font-size:9.4px;line-height:9.4px;color:#858585;font-weight:700;transform:scaleX(0.9208);transform-origin:0 0;">DUE DATE</div>
<div class="t" style="left:1128.80px;top:368.99px;font-size:11px;line-height:11px;color:#333333;font-weight:700;transform:scaleX(0.9763);transform-origin:0 0;">12 Apr 2013</div>
<svg class="r" style="left:1197px;top:357.0px;" width="20" height="20" viewBox="0 0 20 20"><path d="M1.2 0.3 L6.2 18.3" stroke="#F5A01A" stroke-width="2.1" fill="none"/><path d="M0.4 0 L10.6 0.8 L11.1 3 L19.5 3.8 L11.4 7.7 L10.6 5.9 L3 8.6 Z" fill="#F5A01A"/></svg>
<div class="t" style="left:821.50px;top:387.59px;font-size:11px;line-height:11px;color:#333333;transform:scaleX(1.0522);transform-origin:0 0;">We have to get on this ASAP.&nbsp; Use standard reporting</div>
<div class="t" style="left:821.50px;top:400.29px;font-size:11px;line-height:11px;color:#333333;transform:scaleX(1.0509);transform-origin:0 0;">system to detail bugs.</div>
<div class="t" style="left:1147.00px;top:421.34px;font-size:30.2px;line-height:30.2px;color:#3A62DC;-webkit-text-stroke:0.4px #FFFFFF;transform:scaleX(0.9101);transform-origin:0 0;">100%</div>
<div class="r" style="left:821px;top:455px;width:396px;height:6px;background-color:#CFCFCF;"></div>
<div class="r" style="left:821px;top:455px;width:396px;height:6px;background-color:#4068DF;"></div>
<div class="t" style="left:821.50px;top:497.29px;font-size:18.2px;line-height:18.2px;color:#2A2A2A;-webkit-text-stroke:0.25px #FFFFFF;transform:scaleX(1.0394);transform-origin:0 0;">Review Training Content</div>
<div class="t" style="left:1145.40px;top:494.34px;font-size:9.4px;line-height:9.4px;color:#858585;font-weight:700;transform:scaleX(0.9208);transform-origin:0 0;">DUE DATE</div>
<div class="t" style="left:1125.00px;top:508.19px;font-size:11px;line-height:11px;color:#333333;font-weight:700;transform:scaleX(0.9985);transform-origin:0 0;">01 Aug 2013</div>
<svg class="r" style="left:1197px;top:496.0px;" width="20" height="20" viewBox="0 0 20 20"><path d="M1.2 0.3 L6.2 18.3" stroke="#1A8A1A" stroke-width="2.1" fill="none"/><path d="M0.4 0 L10.6 0.8 L11.1 3 L19.5 3.8 L11.4 7.7 L10.6 5.9 L3 8.6 Z" fill="#1A8A1A"/></svg>
<div class="t" style="left:821.50px;top:526.69px;font-size:11px;line-height:11px;color:#333333;transform:scaleX(1.0464);transform-origin:0 0;">Sam please review training content submitted by Leah.</div>
<div class="t" style="left:821.50px;top:539.69px;font-size:11px;line-height:11px;color:#333333;transform:scaleX(1.0617);transform-origin:0 0;">We need to be sure everything is included in the packet.</div>
<div class="t" style="left:1161.00px;top:560.14px;font-size:30.2px;line-height:30.2px;color:#3A62DC;-webkit-text-stroke:0.4px #FFFFFF;transform:scaleX(0.9314);transform-origin:0 0;">60%</div>
<div class="r" style="left:821px;top:594px;width:396px;height:6px;background-color:#CFCFCF;"></div>
<div class="r" style="left:821px;top:594px;width:238px;height:6px;background-color:#4068DF;"></div>
<div class="t" style="left:821.50px;top:636.29px;font-size:18.2px;line-height:18.2px;color:#2A2A2A;-webkit-text-stroke:0.25px #FFFFFF;transform:scaleX(0.9911);transform-origin:0 0;">Classroom Size</div>
<div class="t" style="left:1145.40px;top:633.34px;font-size:9.4px;line-height:9.4px;color:#858585;font-weight:700;transform:scaleX(0.9208);transform-origin:0 0;">DUE DATE</div>
<div class="t" style="left:1124.20px;top:646.89px;font-size:11px;line-height:11px;color:#333333;font-weight:700;transform:scaleX(1.0044);transform-origin:0 0;">05 May 2014</div>
<svg class="r" style="left:1197px;top:635.0px;" width="20" height="20" viewBox="0 0 20 20"><path d="M1.2 0.3 L6.2 18.3" stroke="#6E6E6E" stroke-width="2.1" fill="none"/><path d="M0.4 0 L10.6 0.8 L11.1 3 L19.5 3.8 L11.4 7.7 L10.6 5.9 L3 8.6 Z" fill="#6E6E6E"/></svg>
<div class="t" style="left:821.50px;top:665.69px;font-size:11px;line-height:11px;color:#333333;transform:scaleX(1.0710);transform-origin:0 0;">We have 32 people registered for training in Orlando.</div>
<div class="t" style="left:821.50px;top:678.59px;font-size:11px;line-height:11px;color:#333333;transform:scaleX(1.0512);transform-origin:0 0;">We need to get a bigger space.</div>
<div class="r" style="left:793px;top:428px;width:2px;height:2px;background-color:#404040;"></div>
<div class="r" style="left:793px;top:432px;width:2px;height:2px;background-color:#404040;"></div>
<div class="r" style="left:793px;top:436px;width:2px;height:2px;background-color:#404040;"></div>
<div class="r" style="left:793px;top:440px;width:2px;height:2px;background-color:#404040;"></div>
<svg class="r" style="left:37px;top:63px;" width="24" height="24" viewBox="0 0 24 24"><path d="M12 0 C15.6 0 18.2 2.9 18.2 6.6 C18.2 9.9 16.4 12.6 14.6 14.1 L14.6 15.6 C17.2 16.4 23.6 17.2 24 20.6 L24 24 L0 24 L0 20.6 C0.4 17.2 6.8 16.4 9.4 15.6 L9.4 14.1 C7.6 12.6 5.8 9.9 5.8 6.6 C5.8 2.9 8.4 0 12 0 Z" fill="#4A7DB5"/></svg>
<svg class="r" style="left:113px;top:60px;" width="32" height="29" viewBox="0 0 32 29"><g transform="translate(8,0) scale(1,1)"><path d="M12 0 C15.6 0 18.2 2.9 18.2 6.6 C18.2 9.9 16.4 12.6 14.6 14.1 L14.6 15.6 C17.2 16.4 23.6 17.2 24 20.6 L24 24 L0 24 L0 20.6 C0.4 17.2 6.8 16.4 9.4 15.6 L9.4 14.1 C7.6 12.6 5.8 9.9 5.8 6.6 C5.8 2.9 8.4 0 12 0 Z" fill="#A3A3A3"/></g><g transform="translate(0,4)"><path d="M12 0 C15.6 0 18.2 2.9 18.2 6.6 C18.2 9.9 16.4 12.6 14.6 14.1 L14.6 15.6 C17.2 16.4 23.6 17.2 24 20.6 L24 24 L0 24 L0 20.6 C0.4 17.2 6.8 16.4 9.4 15.6 L9.4 14.1 C7.6 12.6 5.8 9.9 5.8 6.6 C5.8 2.9 8.4 0 12 0 Z" fill="#707070" stroke="#F3F3F3" stroke-width="1.2"/></g></svg>
<svg class="r" style="left:184px;top:63px;" width="30" height="30" viewBox="0 0 30 30"><path d="M12 0 C15.6 0 18.2 2.9 18.2 6.6 C18.2 9.9 16.4 12.6 14.6 14.1 L14.6 15.6 C17.2 16.4 23.6 17.2 24 20.6 L24 24 L0 24 L0 20.6 C0.4 17.2 6.8 16.4 9.4 15.6 L9.4 14.1 C7.6 12.6 5.8 9.9 5.8 6.6 C5.8 2.9 8.4 0 12 0 Z" fill="#6E6E6E"/><circle cx="21" cy="20.8" r="7.6" fill="#6FA58D" stroke="#F3F3F3" stroke-width="1"/><rect x="16.2" y="19.8" width="2.2" height="2.2" fill="#fff"/><rect x="20" y="19.8" width="2.2" height="2.2" fill="#fff"/><rect x="23.8" y="19.8" width="2.2" height="2.2" fill="#fff"/></svg>
<svg class="r" style="left:195px;top:112px;" width="5" height="3" viewBox="0 0 5 3"><path d="M0 0 L5 0 L2.5 3 Z" fill="#333"/></svg>
<svg class="r" style="left:372px;top:112px;" width="5" height="3" viewBox="0 0 5 3"><path d="M0 0 L5 0 L2.5 3 Z" fill="#333"/></svg>
<svg class="r" style="left:256px;top:63px;" width="24" height="24" viewBox="0 0 24 24"><path d="M1.5 1.5 L22.5 22.5 M22.5 1.5 L1.5 22.5" stroke="#E0603A" stroke-width="2.8" stroke-linecap="butt"/></svg>
<svg class="r" style="left:315px;top:61px;" width="28" height="28" viewBox="0 0 28 28"><path d="M16.36 6.1 L22.44 0.02 L27.68 5.26 L21.6 11.34 Z" fill="#DB5E3A"/><path d="M1.87 20.6 L16.36 6.1 L21.6 11.34 L7.1 25.83 Z" fill="#E8BD7A"/><path d="M0.38 27.32 L1.87 20.6 L7.1 25.83 Z" fill="#FFFFFF"/><path d="M0.1 27.6 L0.88 24.42 L3.28 26.82 Z" fill="#707070"/></svg>
<svg class="r" style="left:358px;top:61px;" width="32" height="28" viewBox="0 0 32 28"><rect x="0" y="12" width="32" height="16" fill="#6E6E6E"/><rect x="6" y="0" width="20" height="16" fill="#6E6E6E"/><rect x="8" y="2" width="16" height="14" fill="#FFFFFF"/><rect x="10.3" y="4.3" width="11.7" height="1.6" fill="#A8A8A8"/><rect x="10.3" y="8.3" width="7.7" height="1.6" fill="#A8A8A8"/><rect x="10.3" y="12.3" width="11.7" height="1.6" fill="#A8A8A8"/><rect x="22" y="22.3" width="4" height="1.6" fill="#F0B860"/></svg>
<svg class="r" style="left:404px;top:57px;" width="40" height="36" viewBox="0 0 40 36"><rect x="4.1" y="6.1" width="25.7" height="7.5" fill="#6E6E6E"/><rect x="4.1" y="13.6" width="1.8" height="16.2" fill="#6E6E6E"/><rect x="4.1" y="28" width="13.6" height="1.8" fill="#6E6E6E"/><rect x="5.9" y="13.6" width="23.9" height="14.4" fill="#FFFFFF"/><rect x="5.9" y="6.1" width="6.1" height="3.7" fill="#F3F3F3"/><rect x="22" y="6.1" width="5.7" height="3.7" fill="#F3F3F3"/><rect x="8.2" y="4.1" width="1.6" height="3.4" fill="#6E6E6E"/><rect x="24" y="4.1" width="1.7" height="3.4" fill="#6E6E6E"/><g fill="#8E8E8E"><rect x="8.2" y="16.2" width="1.7" height="1.7"/><rect x="20.1" y="16.2" width="1.7" height="1.7"/><rect x="8.2" y="20.1" width="1.7" height="1.7"/><rect x="20.1" y="20.1" width="1.7" height="1.7"/><rect x="8.2" y="24.1" width="1.7" height="1.7"/><rect x="12.2" y="24.1" width="1.7" height="1.7"/><rect x="16.1" y="24.1" width="1.7" height="1.7"/><rect x="20.1" y="24.1" width="1.7" height="1.7"/></g><rect x="12" y="15.9" width="6" height="5.9" fill="#D9573A"/><rect x="14.1" y="17.9" width="1.9" height="1.9" fill="#fff"/><path d="M28 15.9 C30.6 15.9 32.2 18 32.2 20.6 C32.2 22.6 31.2 24.2 30.2 25 L30.2 26.4 C32 26.9 35.8 27.6 35.9 30.5 L35.9 33.9 L20 33.9 L20 30.5 C20.2 27.6 24 26.9 25.8 26.4 L25.8 25 C24.8 24.2 23.8 22.6 23.8 20.6 C23.8 18 25.4 15.9 28 15.9 Z" fill="#4A7DB5" stroke="#F3F3F3" stroke-width="1.4" paint-order="stroke"/></svg>
<svg class="r" style="left:463px;top:58px;" width="24" height="33" viewBox="0 0 24 33"><rect x="0" y="4.5" width="24" height="28" fill="#EFC586"/><rect x="1.8" y="6" width="20.4" height="25" fill="#6E6E6E"/><rect x="3.8" y="9" width="16.4" height="20.3" fill="#FFFFFF"/><path d="M4 1.2 L9 1.2 Q12 -1 15 1.2 L20 1.2 L20 7.5 L4 7.5 Z" fill="#6E6E6E"/><path d="M6.6 20.4 L11.1 24.4 L17.5 16" fill="none" stroke="#D9573A" stroke-width="2.4"/></svg>
<svg class="r" style="left:517px;top:63px;" width="33" height="27" viewBox="0 0 33 27"><rect x="8.9" y="0.9" width="23" height="16.8" fill="#FFFFFF" stroke="#3A78BC" stroke-width="1.8"/><rect x="0.9" y="8.9" width="22.9" height="16.8" fill="#FFFFFF" stroke="#3A78BC" stroke-width="1.8"/><rect x="11.5" y="7" width="10.5" height="3" fill="#FFFFFF"/><path d="M1.4 11.4 L11.9 18.9 L22.4 11.4" fill="none" stroke="#3A78BC" stroke-width="1.7"/><path d="M1.4 24.4 L7.5 16.2 M22.4 24.4 L16.3 16.2" fill="none" stroke="#3A78BC" stroke-width="1.4"/><path d="M17.3 5.8 L17.3 11.5 M14.4 8.7 L20.1 8.7" stroke="#3A78BC" stroke-width="1.8"/></svg>
<div class="r" style="left:835px;top:59px;width:1px;height:61px;background-color:#D0D0D0;"></div>
<div class="r" style="left:836px;top:78px;width:11px;height:1px;background-color:#D0D0D0;"></div>
<div class="r" style="left:836px;top:99px;width:11px;height:1px;background-color:#D0D0D0;"></div>
<svg class="r" style="left:838px;top:65px;" width="7" height="4" viewBox="0 0 7 4"><path d="M0 4 L7 4 L3.5 0 Z" fill="#C0C0C0"/></svg>
<svg class="r" style="left:838px;top:87px;" width="7" height="4" viewBox="0 0 7 4"><path d="M0 0 L7 0 L3.5 4 Z" fill="#C0C0C0"/></svg>
<svg class="r" style="left:838px;top:107px;" width="7" height="7" viewBox="0 0 7 7"><rect x="0" y="0" width="7" height="1.3" fill="#555"/><path d="M0 2.6 L7 2.6 L3.5 6.5 Z" fill="#555"/></svg>
<svg class="r" style="left:587px;top:66px;" width="13" height="12" viewBox="0 0 13 12"><rect x="0" y="5" width="2" height="7" fill="#3A78BC"/><path d="M3 5 L6 5 L7.5 0.5 Q9.5 0 9.2 3 L8.8 4.6 L12.2 4.6 Q13 5 12.6 6.5 L11.5 11.5 L3 11.5 Z" fill="#EBB458"/></svg>
<svg class="r" style="left:587px;top:84px;" width="13" height="14" viewBox="0 0 13 14"><circle cx="6.5" cy="5.5" r="5.3" fill="#EBB458"/><circle cx="6.5" cy="5.5" r="3.2" fill="#F6D59A"/><circle cx="6.5" cy="5.5" r="2.4" fill="#EBB458"/><path d="M3 10 L0.5 13 M10 10 L12.5 13" stroke="#3A78BC" stroke-width="1.6"/><circle cx="1" cy="12.5" r="1.2" fill="#3A78BC"/><circle cx="12" cy="12.5" r="1.2" fill="#3A78BC"/></svg>
<svg class="r" style="left:587px;top:101px;" width="15" height="11" viewBox="0 0 15 11"><rect x="0" y="1" width="2" height="9" fill="#3A78BC"/><rect x="13" y="1" width="2" height="9" fill="#3A78BC"/><path d="M2.5 3 L6 2 L9 3.5 L12.5 2.5 L12.5 7 L9 9.5 L6 8.5 L2.5 7 Z" fill="#EBB458"/></svg>
<svg class="r" style="left:711px;top:65px;" width="12" height="14" viewBox="0 0 12 14"><path d="M2 0.5 L10 0.5 L10 5 Q10 9 6 9.5 Q2 9 2 5 Z" fill="#EBB458"/><path d="M2 2 Q0 2 0.5 4.5 Q1 6 2.5 6.5 M10 2 Q12 2 11.5 4.5 Q11 6 9.5 6.5" fill="none" stroke="#EBB458" stroke-width="1"/><rect x="5" y="9" width="2" height="2.5" fill="#EBB458"/><rect x="2.5" y="11.5" width="7" height="2.2" fill="#EBB458"/></svg>
<svg class="r" style="left:710px;top:82px;" width="14" height="14" viewBox="0 0 14 14"><circle cx="7" cy="8" r="5.3" fill="none" stroke="#E0603A" stroke-width="1.3"/><rect x="5" y="0.5" width="4" height="1.3" fill="#E0603A"/><rect x="6.4" y="1.5" width="1.2" height="1.5" fill="#E0603A"/><path d="M7 5 L7 8.5 L9.5 8.5" fill="none" stroke="#E0603A" stroke-width="1.2"/></svg>
<svg class="r" style="left:867px;top:63px;" width="12" height="10" viewBox="0 0 12 10"><rect x="0" y="0" width="2" height="2" fill="#555"/><rect x="3.5" y="0" width="8.5" height="2" fill="#555"/><rect x="0" y="4" width="2" height="2" fill="#555"/><rect x="3.5" y="4" width="8.5" height="2" fill="#555"/><rect x="0" y="8" width="2" height="2" fill="#555"/><rect x="3.5" y="8" width="8.5" height="2" fill="#555"/></svg>
<svg class="r" style="left:865px;top:84px;" width="16" height="12" viewBox="0 0 16 12"><rect x="0.6" y="0.6" width="14.8" height="10.8" fill="#fff" stroke="#6E6E6E" stroke-width="1.2"/><circle cx="4.8" cy="4" r="1.7" fill="#3A78BC"/><path d="M2 9.5 Q2 6.5 4.8 6.5 Q7.6 6.5 7.6 9.5 Z" fill="#3A78BC"/><rect x="9" y="3" width="4.5" height="1" fill="#999"/><rect x="9" y="5.3" width="4.5" height="1" fill="#999"/><rect x="9" y="7.6" width="4.5" height="1" fill="#999"/></svg>
<svg class="r" style="left:868px;top:104px;" width="11" height="15" viewBox="0 0 11 15"><path d="M5.2 14.5 L1.2 8 Q0 6 0 5 A5.2 5.2 0 0 1 10.4 5 Q10.4 6 9.2 8 Z" fill="#DE5F3C"/><circle cx="5.2" cy="5.1" r="2.3" fill="#fff"/></svg>
<svg class="r" style="left:947px;top:63px;" width="25" height="24" viewBox="0 0 25 24"><path d="M0 0 L24.5 0 L14.5 10.5 L12.6 23.5 L11.4 23.5 L10 10.5 Z" fill="#6E6E6E"/></svg>
<svg class="r" style="left:1005px;top:61px;" width="28" height="28" viewBox="0 0 28 28"><circle cx="14" cy="14" r="14" fill="#6FA58D"/><path d="M10.5 7.5 L20.5 14 L10.5 20.5 Z" fill="#fff"/></svg>
<svg class="r" style="left:1053px;top:62px;" width="14" height="14" viewBox="0 0 14 14"><path d="M1.5 0 L12.5 0 Q14 0 14 1.5 L14 9.5 Q14 11 12.5 11 L5.5 11 L3 13.8 L3 11 L1.5 11 Q0 11 0 9.5 L0 1.5 Q0 0 1.5 0 Z" fill="#4A7DB5"/><text x="7" y="8.8" font-size="9" font-family="Liberation Sans" font-weight="700" fill="#fff" text-anchor="middle">?</text></svg>
<svg class="r" style="left:1053px;top:83px;" width="14" height="13" viewBox="0 0 14 13"><path d="M0 0.5 L2 2 L3 8.5 L12.5 8.5 L14 2.5 L2.5 2.5" fill="none" stroke="#E0603A" stroke-width="0"/><path d="M0.3 0 L2.6 2 L14 2 L12.5 6.8 L3.6 6.8 Z" fill="#E0603A"/><rect x="3" y="7" width="9.5" height="1.5" fill="#E0603A"/><circle cx="4" cy="11.3" r="1.4" fill="#6E6E6E"/><circle cx="10.3" cy="11.3" r="1.4" fill="#6E6E6E"/></svg>
<svg class="r" style="left:1053px;top:105px;" width="14" height="14" viewBox="0 0 14 14"><circle cx="7" cy="7" r="7" fill="#4A7DB5"/><circle cx="7" cy="3.8" r="1.2" fill="#fff"/><rect x="6" y="5.8" width="2" height="5.5" fill="#fff"/></svg>
<svg class="r" style="left:1230px;top:129px;" width="12" height="10" viewBox="0 0 12 10"><path d="M5.5 1 L10.6 6.1 L8.4 8.3 L5.5 5.4 L2.6 8.3 L0.4 6.1 Z" fill="#FFFFFF" stroke="#505050" stroke-width="1.25" stroke-linejoin="round"/></svg>
<svg class="r" style="left:1078px;top:11px;" width="14" height="12" viewBox="0 0 14 12"><rect x="0.5" y="0.5" width="13" height="11" fill="none" stroke="#DCE6F0" stroke-width="1"/><path d="M0.5 3.2 L13.5 3.2" stroke="#DCE6F0" stroke-width="1"/><path d="M7 11.5 L7 5 M4.5 7.3 L7 4.8 L9.5 7.3" fill="none" stroke="#DCE6F0" stroke-width="1"/></svg>
<div class="r" style="left:1127px;top:17px;width:10px;height:1px;background-color:#DCE6F0;"></div>
<div class="r" style="left:1175px;top:11px;width:10px;height:10px;box-sizing:border-box;border:1px solid #DCE6F0;background:transparent;"></div>
<svg class="r" style="left:1223px;top:11px;" width="11" height="11" viewBox="0 0 11 11"><path d="M0.3 0.3 L10.7 10.7 M10.7 0.3 L0.3 10.7" stroke="#DCE6F0" stroke-width="1"/></svg>
<svg class="r" style="left:36px;top:8px;" width="13" height="17" viewBox="0 0 13 17"><path d="M3 6 A3.6 3.6 0 1 1 9.6 5.6" fill="none" stroke="#8DB3E0" stroke-width="1"/><path d="M4.6 4.4 Q4.9 3.2 5.9 3.2 Q6.9 3.2 7.1 4.4 L7.1 8.6 Q7.6 7.9 8.4 8.1 Q9.1 8.3 9.2 9 Q9.8 8.5 10.5 8.8 Q11 9.1 11 9.7 Q11.6 9.4 12.1 9.8 Q12.6 10.2 12.6 11 L12.4 13.4 Q11.9 16.3 8.6 16.6 L6.6 16.6 Q4.6 16.4 3.6 14.6 L0.9 11 Q0.5 10.1 1.3 9.7 Q2.1 9.4 2.9 10.1 L4.6 11.6 Z" fill="#F3B34C" stroke="#B56A22" stroke-width="0.7"/><path d="M9.2 9 L9.2 11.2 M11 9.7 L11 11.6" stroke="#B56A22" stroke-width="0.6"/></svg>
<svg class="r" style="left:56px;top:15px;" width="6" height="4" viewBox="0 0 6 4"><path d="M0 0 L6 0 L3 3.5 Z" fill="#fff"/></svg>
<svg class="r" style="left:81px;top:12px;" width="7" height="7" viewBox="0 0 7 7"><rect x="0.5" y="1" width="6" height="1" fill="#fff"/><path d="M0.5 2.5 L6.5 2.5 L3.5 6 Z" fill="#fff"/></svg>
<svg class="r" style="left:20px;top:36px;" width="16" height="13" viewBox="0 0 16 13"><rect x="0.8" y="0.8" width="14.4" height="11.4" rx="1.2" fill="#fff" stroke="#1F3A66" stroke-width="1.2"/><rect x="1.5" y="1.5" width="4" height="10" fill="#E2E2E2"/><rect x="5.6" y="1" width="1" height="11" fill="#1F3A66"/><rect x="8.5" y="3" width="5" height="1" fill="#333"/><rect x="8.5" y="5" width="5" height="1" fill="#333"/><rect x="8.5" y="7" width="5" height="1" fill="#333"/><rect x="8.5" y="9" width="5" height="1" fill="#333"/></svg>
<svg class="r" style="left:39px;top:41px;" width="6" height="4" viewBox="0 0 6 4"><path d="M0 0 L6 0 L3 4 Z" fill="#fff"/></svg>
<svg class="r" style="left:176px;top:154px;" width="12" height="13" viewBox="0 0 12 13"><path d="M7.2 2.1 L10.1 2.1 L5.2 6.4 L10.1 10.7 L7.2 10.7 L2.1 6.4 Z" fill="#555"/></svg>
<svg class="r" style="left:20px;top:198px;" width="6" height="6" viewBox="0 0 6 6"><path d="M6 0 L6 6 L0 6 Z" fill="#666"/></svg>
<svg class="r" style="left:20px;top:324px;" width="6" height="6" viewBox="0 0 6 6"><path d="M6 0 L6 6 L0 6 Z" fill="#666"/></svg>
<div class="r" style="left:756px;top:175px;width:1px;height:18px;background-color:#ABABAB;"></div>
<div class="r" style="left:757px;top:175px;width:15px;height:18px;background-color:#F3F3F3;"></div>
<svg class="r" style="left:758px;top:177px;" width="13" height="13" viewBox="0 0 13 13"><circle cx="7.5" cy="5.4" r="3.2" fill="none" stroke="#555" stroke-width="1.1"/><path d="M5.2 7.8 L1.8 11.3" stroke="#555" stroke-width="1.3"/></svg>
<svg class="r" style="left:303px;top:227px;" width="9" height="5" viewBox="0 0 9 5"><path d="M0 5 L9 5 L4.5 0 Z" fill="#555"/></svg>
<svg class="r" style="left:218px;top:248px;" width="28" height="24" viewBox="0 0 28 24"><path d="M12.4 9.9 A3.9 3.9 0 1 1 19.7 9.9" fill="none" stroke="#D9593A" stroke-width="1.2"/><ellipse cx="16" cy="8.5" rx="2" ry="2.4" fill="#D9593A"/><path d="M13.8 16.8 L13.8 13.8 Q14 11.4 15 11.2 L16.2 12.6 L17.4 11.2 Q20.8 11.6 20.9 14.4 L20.9 16.8 Z" fill="#D9593A"/><ellipse cx="10" cy="10.2" rx="3.1" ry="3.5" fill="#4178BE" stroke="#F0F0F0" stroke-width="0.7"/><path d="M4.9 20.1 L4.9 17.4 Q5 14.5 8 14 L10 16.4 L12 14 Q15 14.5 15.1 17.4 L15.1 20.1 Z" fill="#4178BE" stroke="#F0F0F0" stroke-width="0.7"/></svg>
<svg class="r" style="left:653.0px;top:744px;" width="6" height="6" viewBox="0 0 6 6"><circle cx="3" cy="3" r="2.6" fill="#444"/></svg>
<svg class="r" style="left:663.5px;top:744px;" width="6" height="6" viewBox="0 0 6 6"><circle cx="3" cy="3" r="2.6" fill="#444"/></svg>
<svg class="r" style="left:674.0px;top:744px;" width="6" height="6" viewBox="0 0 6 6"><circle cx="3" cy="3" r="2.6" fill="#444"/></svg>
<div class="r" style="left:1175px;top:770px;width:28px;height:21px;background-color:#C8C8C8;"></div>
<svg class="r" style="left:1182px;top:775px;" width="14" height="12" viewBox="0 0 14 12"><rect x="0.5" y="0.5" width="13" height="11" fill="#C8C8C8" stroke="#444" stroke-width="1"/><rect x="1" y="1" width="4" height="10" fill="#444"/></svg>
<svg class="r" style="left:1210px;top:775px;" width="14" height="13" viewBox="0 0 14 13"><path d="M0.5 0.5 L5.5 0.5 L7 1.3 L8.5 0.5 L13.5 0.5 L13.5 11.5 L8.5 11.5 L7 12.3 L5.5 11.5 L0.5 11.5 Z" fill="#FFFFFF" stroke="#6A6A6A" stroke-width="1"/><rect x="2" y="2" width="3.8" height="1" fill="#777"/><rect x="8.2" y="2" width="3.8" height="1" fill="#777"/><rect x="2" y="4" width="3.8" height="1" fill="#777"/><rect x="8.2" y="4" width="3.8" height="1" fill="#777"/><rect x="2" y="6" width="3.8" height="1" fill="#777"/><rect x="8.2" y="6" width="3.8" height="1" fill="#777"/><rect x="2" y="8" width="3.8" height="1" fill="#777"/><rect x="8.2" y="8" width="3.8" height="1" fill="#777"/></svg>
<div class="r" style="left:1248px;top:781px;width:2px;height:2px;background-color:#444;"></div>
<div class="r" style="left:1245px;top:784px;width:2px;height:2px;background-color:#444;"></div>
<div class="r" style="left:1248px;top:784px;width:2px;height:2px;background-color:#444;"></div>
<div class="r" style="left:1242px;top:787px;width:2px;height:2px;background-color:#444;"></div>
<div class="r" style="left:1245px;top:787px;width:2px;height:2px;background-color:#444;"></div>
<div class="r" style="left:1248px;top:787px;width:2px;height:2px;background-color:#444;"></div>
<svg class="r" style="left:803px;top:161px;" width="128" height="128" viewBox="0 0 128 128"><defs><linearGradient id="hg" x1="0" y1="0" x2="0" y2="1"><stop offset="0" stop-color="#EFD9A6"/><stop offset="0.6" stop-color="#E2C283"/><stop offset="1" stop-color="#D7B272"/></linearGradient><linearGradient id="jg" x1="0" y1="0" x2="1" y2="0"><stop offset="0" stop-color="#8A8481"/><stop offset="0.5" stop-color="#958F8B"/><stop offset="1" stop-color="#86807C"/></linearGradient></defs><path d="M49 58 C44 46 45 30 50 19 C55 8 63 3.5 72 3.5 C83 3.5 91 10 94 22 C97 35 96 47 93 59 C88 58 86 57 84 57 L60 57 C57 57 54 58 49 58 Z" fill="url(#hg)"/><path d="M55 72 L77 72 L74 86 L67 98 L59 98 Z" fill="#1E1E1E"/><path d="M63 44 L79 44 L80 54 L91 57 L72 81 L68 81 L49 58 L62 54 Z" fill="#EFC7A8"/><path d="M53 57 C45 59 37 63 34 71 C31 79 30 89 28 99 L25 110 C25 119 31 124 40 125 L96 125 C102 120 104 112 105 100 C106 88 106 78 103 70 C100 62 94 59 87 56 L73 86 L67 96 L59 70 Z" fill="url(#jg)"/><path d="M53 57 L48 64 L54 71 L51 74 L64 104" fill="none" stroke="#6F6965" stroke-width="1"/><path d="M87 56 L93 62 L88 69 L92 72 L76 100" fill="none" stroke="#6F6965" stroke-width="1"/><path d="M53 57 L59 70 L67 96" fill="none" stroke="#7A7470" stroke-width="0.8"/><path d="M30 101 Q56 95 97 93 Q104 99 102 113 Q72 117 38 123 Q28 118 30 101 Z" fill="#9B9591"/><path d="M38 123 Q72 117 102 113" fill="none" stroke="#77716D" stroke-width="1.2"/><path d="M30 101 Q56 95 76 94" fill="none" stroke="#807A76" stroke-width="0.9"/><path d="M20 102 Q24 96 32 96 L38 100 Q40 110 36 117 Q30 121 24 118 Q20 112 20 102 Z" fill="#EDC2A4"/><path d="M76 95 Q86 91 97 93 Q101 97 99 103 Q96 108 88 109 L78 108 Z" fill="#EDC2A4"/><path d="M80 99 L95 98 M80 103 L94 103" stroke="#D9A98A" stroke-width="0.6"/><path d="M71 12 Q83 12 83.5 29 Q83.5 41 77.5 48 Q74 51.5 71 51.5 Q68 51.5 64.5 48 Q58.5 41 58.5 29 Q59 12 71 12 Z" fill="#F3D0B3"/><path d="M58 30 Q57 12 71 9 Q86 9 88 27 Q84 16 73 15.5 Q62 17 58 30 Z" fill="#EAD19C"/><path d="M58 26 Q52 42 55 57 Q60 44 60 30 Z" fill="#D9B474"/><path d="M86 24 Q93 42 90 58 Q85 44 84 28 Z" fill="#D9B474"/><path d="M52 24 Q49 40 52 54" fill="none" stroke="#F5E6C6" stroke-width="1"/><rect x="63.5" y="27.5" width="4.2" height="1.6" fill="#6E5E66"/><rect x="75" y="27.5" width="4.2" height="1.6" fill="#6E5E66"/><path d="M65.5 40.5 Q71 45.5 76.5 40.5 Q71 43 65.5 40.5 Z" fill="#C97C70" stroke="#C97C70" stroke-width="1.1"/></svg>
<svg class="r" style="left:946px;top:244px;" width="28" height="28" viewBox="0 0 28 28"><circle cx="14" cy="14" r="12.8" fill="none" stroke="#3A3A3A" stroke-width="2.1"/></svg>
<svg class="r" style="left:984px;top:244px;" width="28" height="28" viewBox="0 0 28 28"><circle cx="14" cy="14" r="12.8" fill="none" stroke="#3A3A3A" stroke-width="2.1"/></svg>
<svg class="r" style="left:1022px;top:244px;" width="28" height="28" viewBox="0 0 28 28"><circle cx="14" cy="14" r="12.8" fill="none" stroke="#3A3A3A" stroke-width="2.1"/></svg>
<svg class="r" style="left:1060px;top:244px;" width="28" height="28" viewBox="0 0 28 28"><circle cx="14" cy="14" r="12.8" fill="none" stroke="#3A3A3A" stroke-width="2.1"/></svg>
<svg class="r" style="left:954px;top:253px;" width="12" height="12" viewBox="0 0 12 12"><path d="M0 0 L12 0 L12 8.7 L7.3 8.7 L6.2 11.8 L5.4 8.7 L0 8.7 Z" fill="#3A3A3A"/></svg>
<svg class="r" style="left:992px;top:252px;" width="12" height="11" viewBox="0 0 12 11"><path d="M1.5 1.8 L3.8 0.5 L5.6 3.4 L4.2 4.6 Q5.4 7 7.4 8 L8.6 6.8 L11.5 8.8 L10 11 Q4.5 10.5 1.5 1.8 Z" fill="#3A3A3A"/></svg>
<svg class="r" style="left:1030px;top:254px;" width="13" height="8" viewBox="0 0 13 8"><rect x="0" y="0" width="9.8" height="7.6" fill="#3A3A3A"/><path d="M9 3 L12.2 0 L12.2 7.6 L9 4.6 Z" fill="#3A3A3A"/></svg>
<svg class="r" style="left:1068px;top:253px;" width="12" height="9" viewBox="0 0 12 9"><rect x="0" y="0" width="12" height="8.7" fill="#3A3A3A"/><path d="M0.3 0.5 L6 5.6 L11.7 0.5" fill="none" stroke="#F0F0F0" stroke-width="0.9"/></svg>
</body></html>
